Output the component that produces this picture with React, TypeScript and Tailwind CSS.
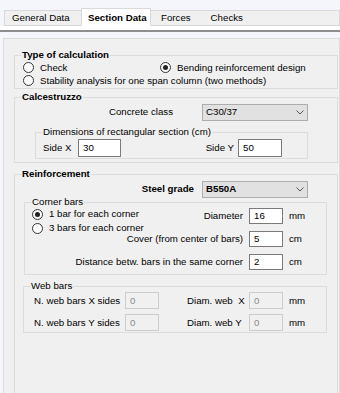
import React from 'react';

const Radio = ({ checked = false }: { checked?: boolean }) => (
    <span className="flex h-[11px] w-[11px] shrink-0 items-center justify-center rounded-full border border-[#333333] bg-white">
        {checked && <span className="h-[5px] w-[5px] rounded-full bg-[#222222]" />}
    </span>
);

const Combo = ({ value, bold = false }: { value: string; bold?: boolean }) => (
    <div className="flex h-[17px] w-[106px] items-center justify-between border border-[#adadad] bg-[#e1e1e1] pl-[3px] pr-[3px]">
        <span className={bold ? 'font-bold' : ''}>{value}</span>
        <svg width="8" height="5" viewBox="0 0 8 5">
            <path d="M0.5 0.5 L4 4 L7.5 0.5" fill="none" stroke="#555555" strokeWidth="1" />
        </svg>
    </div>
);

const TextBox = ({ value, disabled = false, className = '' }: { value: string; disabled?: boolean; className?: string }) => (
    <div
        className={`flex shrink-0 items-center border pl-[4px] ${
            disabled ? 'border-[#cccccc] bg-[#f0f0f0] text-[#8d8d8d]' : 'border-[#7a7a7a] bg-white'
        } ${className}`}
    >
        {value}
    </div>
);

const Group = ({
    title,
    bold = false,
    className = '',
    legend = 'leading-[12px]',
    children,
}: {
    title: string;
    bold?: boolean;
    className?: string;
    legend?: string;
    children: React.ReactNode;
}) => (
    <fieldset className={`min-w-0 border border-[#dcdcdc] ${className}`}>
        <legend className={`ml-[6px] px-[1px] ${legend} ${bold ? 'font-bold' : ''}`}>{title}</legend>
        {children}
    </fieldset>
);

// one labelled input with its unit, right aligned
const Field = ({ label, value, unit }: { label: string; value: string; unit: string }) => (
    <div className="flex h-[16px] items-center justify-end whitespace-nowrap">
        <span className="mr-[6px]">{label}</span>
        <TextBox value={value} className="h-[16px] w-[34px] pl-[2px]" />
        <span className="ml-[6px] w-[37px]">{unit}</span>
    </div>
);

export default function App() {
    return (
        <div className="h-[393px] w-[340px] overflow-hidden bg-[#f4f6fb] font-['Liberation_Sans',Arial,sans-serif] text-[9.7px] leading-none text-black">
            {/* Tabs */}
            <div className="flex h-[26px] items-end pl-[4px]">
                <div className="flex h-[16px] w-[77px] items-center border border-r-0 border-[#d9d9d9] bg-[#f0f0f0] pl-[7px]">
                    General Data
                </div>
                <div className="flex h-[18px] w-[70px] items-center border border-b-0 border-[#d9d9d9] bg-white pl-[6px] font-bold">
                    Section Data
                </div>
                <div className="flex h-[16px] flex-1 items-center border border-l-0 border-[#d9d9d9] bg-[#f0f0f0]">
                    <span className="ml-[10px]">Forces</span>
                    <span className="ml-[20px]">Checks</span>
                </div>
            </div>
            <div className="h-[4px] bg-white" />
            <div className="h-[2px] bg-[#8e8e8e]" />
            <div className="h-[6px]" />

            {/* Page */}
            <div className="ml-[3px] h-[400px] w-[337px] border border-b-0 border-[#dcdcdc] bg-[#f0f0f0] pl-[10px] pr-[1px] pt-[10px]">
                <Group title="Type of calculation" bold className="pb-[1px]">
                    <div className="flex h-[13px] items-center pl-[8px]">
                        <div className="flex w-[137px] items-center gap-[6px]">
                            <Radio />
                            <span>Check</span>
                        </div>
                        <div className="flex items-center gap-[6px]">
                            <Radio checked />
                            <span>Bending reinforcement design</span>
                        </div>
                    </div>
                    <div className="flex h-[13px] items-center gap-[6px] pl-[8px]">
                        <Radio />
                        <span>Stability analysis for one span column (two methods)</span>
                    </div>
                </Group>

                <Group title="Calcestruzzo" bold className="mt-[2px] pb-[3px]">
                    <div className="flex h-[18px] items-center justify-end pr-[29px]">
                        <span className="mr-[29px]">Concrete class</span>
                        <Combo value="C30/37" />
                    </div>
                    <Group title="Dimensions of rectangular section (cm)" className="ml-[20px] mr-[29px] mt-[5px] pb-[1px]">
                        <div className="mt-[1px] flex h-[18px] items-center pl-[7px] pr-[25px]">
                            <span className="w-[35px]">Side X</span>
                            <TextBox value="30" className="h-[18px] w-[43px]" />
                            <span className="ml-auto mr-[4px]">Side Y</span>
                            <TextBox value="50" className="h-[18px] w-[44px]" />
                        </div>
                    </Group>
                </Group>

                <Group title="Reinforcement" bold className="mt-[5px] h-[240px]">
                    <div className="mt-[1px] flex h-[16px] items-center justify-end pr-[29px]">
                        <span className="mr-[8px] font-bold">Steel grade</span>
                        <Combo value="B550A" bold />
                    </div>

                    <Group title="Corner bars" legend="leading-[10px]" className="ml-[9px] mr-[10px] pb-[4px]">
                        <div className="flex items-start">
                            {/* radios run on past this narrow column; the fields sit lower on the right */}
                            <div className="flex w-[70px] shrink-0 flex-col whitespace-nowrap pl-[7px]">
                                <div className="flex h-[14px] items-center gap-[6px]">
                                    <Radio checked />
                                    <span>1 bar for each corner</span>
                                </div>
                                <div className="flex h-[14px] items-center gap-[6px]">
                                    <Radio />
                                    <span>3 bars for each corner</span>
                                </div>
                            </div>
                            <div className="flex min-w-0 flex-1 flex-col gap-[7px] pt-[1px]">
                                <Field label="Diameter" value="16" unit="mm" />
                                <Field label="Cover (from center of bars)" value="5" unit="cm" />
                            </div>
                        </div>
                        <div className="mt-[7px]">
                            <Field label="Distance betw. bars in the same corner" value="2" unit="cm" />
                        </div>
                    </Group>

                    <Group title="Web bars" legend="leading-[10px]" className="ml-[8px] mr-[10px] mt-[6px] pb-[1px]">
                        <div className="mt-[1px] flex h-[17px] items-center whitespace-nowrap pl-[10px]">
                            <span className="w-[91px]">N. web bars X sides</span>
                            <TextBox value="0" disabled className="h-[17px] w-[34px]" />
                            <span className="ml-[28px] w-[62px] whitespace-pre">Diam. web  X</span>
                            <TextBox value="0" disabled className="h-[17px] w-[34px]" />
                            <span className="ml-[6px]">mm</span>
                        </div>
                        <div className="mt-[5px] flex h-[17px] items-center whitespace-nowrap pl-[10px]">
                            <span className="w-[91px]">N. web bars Y sides</span>
                            <TextBox value="0" disabled className="h-[17px] w-[34px]" />
                            <span className="ml-[28px] w-[62px]">Diam. web Y</span>
                            <TextBox value="0" disabled className="h-[17px] w-[34px]" />
                            <span className="ml-[6px]">mm</span>
                        </div>
                    </Group>
                </Group>
            </div>
        </div>
    );
}
